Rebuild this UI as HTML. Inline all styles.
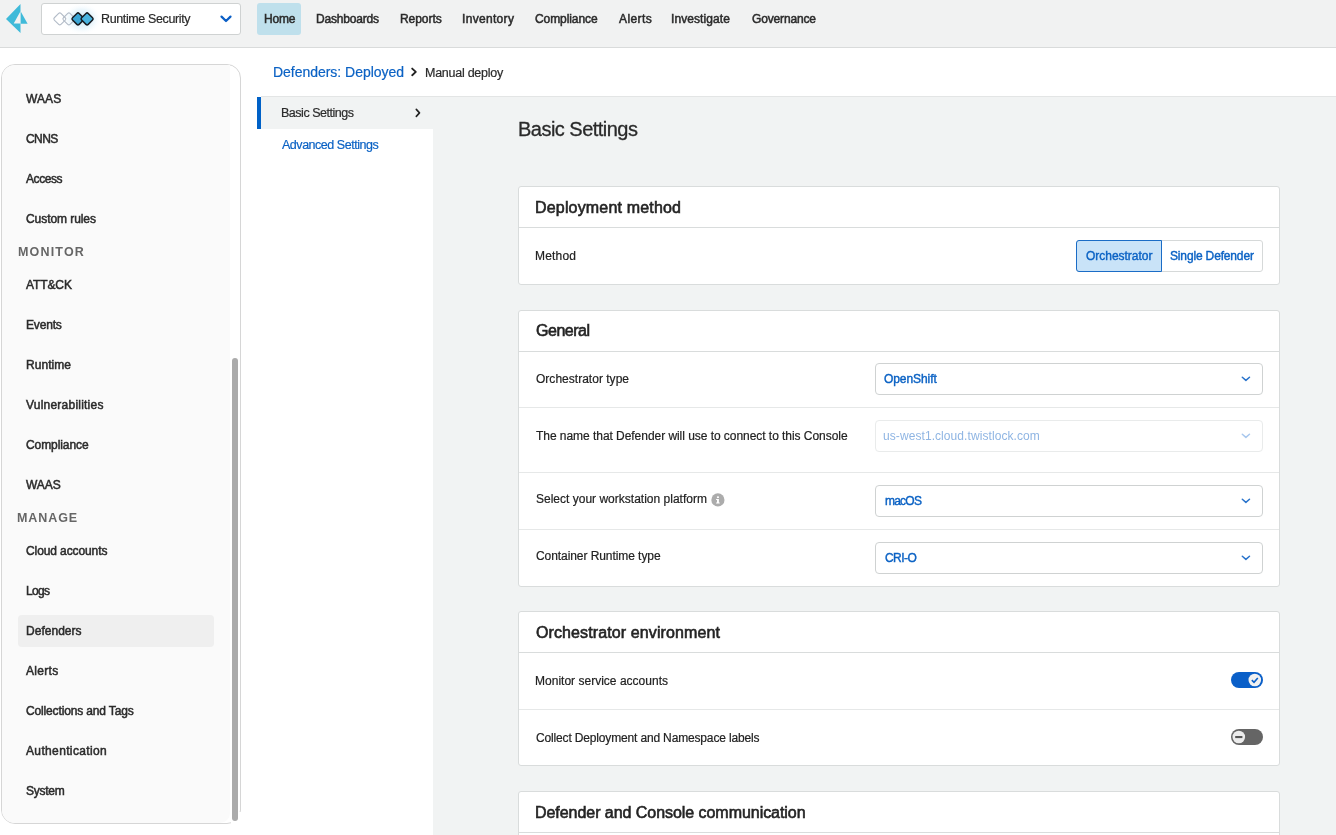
<!DOCTYPE html>
<html><head><meta charset="utf-8"><title>Manual deploy</title>
<style>
html,body{margin:0;padding:0;width:1336px;height:835px;overflow:hidden;background:#fff;font-family:"Liberation Sans",sans-serif}
.a{position:absolute;box-sizing:content-box}
.t{position:absolute;white-space:nowrap;line-height:20px;will-change:transform}
</style></head><body>
<div class="a" style="left:0;top:0;width:1336px;height:47px;background:#f1f2f2;border-bottom:1px solid #d9dbdb"></div>
<div class="a" style="left:41px;top:3px;width:198px;height:30px;border:1px solid #cfd2d2;border-radius:3px;background:#fff"></div>
<div class="a" style="left:257px;top:3px;width:44px;height:32px;background:#bfe0ec;border-radius:3px"></div>
<div class="a" style="left:1px;top:64px;width:238px;height:758px;border:1px solid #d6d6d6;border-radius:14px;background:#fff"></div>
<div class="a" style="left:2px;top:65px;width:228px;height:758px;background:#fafafa;border-radius:13px 0 10px 13px"></div>
<div class="a" style="left:231px;top:812px;width:11px;height:13px;background:#fff"></div>
<div class="a" style="left:232px;top:358px;width:6px;height:463px;background:#ababab;border-radius:3px"></div>
<div class="a" style="left:18px;top:615px;width:196px;height:32px;background:#efefef;border-radius:4px"></div>
<div class="a" style="left:261px;top:96px;width:1075px;height:1px;background:#e3e5e5"></div>
<div class="a" style="left:433px;top:97px;width:903px;height:738px;background:#f1f3f3"></div>
<div class="a" style="left:261px;top:97px;width:172px;height:32px;background:#f1f3f3"></div>
<div class="a" style="left:257px;top:97px;width:4px;height:32px;background:#0061c7"></div>
<div class="a" style="left:518px;top:186px;width:760px;height:97px;border:1px solid #d9dcdc;border-radius:3px;background:#fff"></div><div class="a" style="left:519px;top:227px;width:760px;height:1px;background:#d9dcdc"></div>
<div class="a" style="left:518px;top:310px;width:760px;height:275px;border:1px solid #d9dcdc;border-radius:3px;background:#fff"></div><div class="a" style="left:519px;top:351px;width:760px;height:1px;background:#d9dcdc"></div>
<div class="a" style="left:519px;top:407px;width:760px;height:1px;background:#e6e8e8"></div>
<div class="a" style="left:519px;top:472px;width:760px;height:1px;background:#e6e8e8"></div>
<div class="a" style="left:519px;top:529px;width:760px;height:1px;background:#e6e8e8"></div>
<div class="a" style="left:518px;top:611px;width:760px;height:153px;border:1px solid #d9dcdc;border-radius:3px;background:#fff"></div><div class="a" style="left:519px;top:652px;width:760px;height:1px;background:#d9dcdc"></div>
<div class="a" style="left:519px;top:709px;width:760px;height:1px;background:#e6e8e8"></div>
<div class="a" style="left:518px;top:791px;width:760px;height:98px;border:1px solid #d9dcdc;border-radius:3px;background:#fff"></div><div class="a" style="left:519px;top:832px;width:760px;height:1px;background:#d9dcdc"></div>
<div class="a" style="left:1076px;top:240px;width:185px;height:30px;border:1px solid #d6d9d9;border-radius:3px;background:#fff"></div>
<div class="a" style="left:1076px;top:240px;width:84px;height:30px;border:1px solid #1a6cc6;border-radius:3px 0 0 3px;background:#c9e3f8"></div>
<div class="a" style="left:875px;top:363px;width:386px;height:30px;border:1px solid #cfd2d2;border-radius:4px;background:#fff"></div>
<div class="a" style="left:875px;top:420px;width:386px;height:30px;border:1px solid #e9ebeb;border-radius:4px;background:#fff"></div>
<div class="a" style="left:875px;top:485px;width:386px;height:30px;border:1px solid #cfd2d2;border-radius:4px;background:#fff"></div>
<div class="a" style="left:875px;top:542px;width:386px;height:30px;border:1px solid #cfd2d2;border-radius:4px;background:#fff"></div>
<svg class="a" style="left:0;top:0" width="1336" height="835" viewBox="0 0 1336 835"><path d="M20.5 4.1 L20.5 11.2 L13.7 23.5 L20.5 23.5 L20.5 32.9 L6 19.1 Z" fill="#3fbad9"/><path d="M20.6 11.3 L27.6 23.8 L20.6 23.8 Z" fill="#3fbad9"/><defs><radialGradient id="gl" cx="0.5" cy="0.5" r="0.5"><stop offset="0" stop-color="#c6e6f6"/><stop offset="0.6" stop-color="#e4f3fb" stop-opacity="0.7"/><stop offset="1" stop-color="#ffffff" stop-opacity="0"/></radialGradient></defs><ellipse cx="82" cy="19" rx="20" ry="16" fill="url(#gl)"/><rect x="55.13" y="14.23" width="9.33" height="9.33" rx="1.6" transform="rotate(45 59.8 18.9)" fill="#fff" stroke="#b3bcc8" stroke-width="1.1"/><rect x="64.23" y="14.23" width="9.33" height="9.33" rx="1.6" transform="rotate(45 68.9 18.9)" fill="none" stroke="#b3bcc8" stroke-width="1.1"/><rect x="73.33" y="14.23" width="9.33" height="9.33" rx="1.6" transform="rotate(45 78.0 18.9)" fill="#3aa5d5" stroke="#161c22" stroke-width="1.5"/><rect x="82.43" y="14.23" width="9.33" height="9.33" rx="1.6" transform="rotate(45 87.1 18.9)" fill="#48b3df" stroke="#161c22" stroke-width="1.5"/><path d="M221.5 16.6 L226 21 L230.5 16.6" fill="none" stroke="#0b5fc6" stroke-width="2.2" stroke-linecap="round" stroke-linejoin="round"/><path d="M412.2 68.6 L415.8 71.9 L412.2 75.2" fill="none" stroke="#222" stroke-width="1.9" stroke-linecap="round" stroke-linejoin="round"/><path d="M416.3 109.4 L419.5 112.9 L416.3 116.4" fill="none" stroke="#222" stroke-width="1.6" stroke-linecap="round" stroke-linejoin="round"/><path d="M1242.3 377.2 L1245.9 380.4 L1249.5 377.2" fill="none" stroke="#2a74cc" stroke-width="1.5" stroke-linecap="round" stroke-linejoin="round"/><path d="M1242.3 434.2 L1245.9 437.4 L1249.5 434.2" fill="none" stroke="#a9c8ee" stroke-width="1.5" stroke-linecap="round" stroke-linejoin="round"/><path d="M1242.3 499.2 L1245.9 502.4 L1249.5 499.2" fill="none" stroke="#2a74cc" stroke-width="1.5" stroke-linecap="round" stroke-linejoin="round"/><path d="M1242.3 556.2 L1245.9 559.4 L1249.5 556.2" fill="none" stroke="#2a74cc" stroke-width="1.5" stroke-linecap="round" stroke-linejoin="round"/><circle cx="717.9" cy="499.9" r="6.6" fill="#acacac"/><rect x="716.9" y="496.2" width="2.1" height="1.9" rx="0.9" fill="#fff"/><path d="M716.1 498.9 L718.9 498.9 L718.9 502.4 L719.7 502.4 L719.7 503.5 L716.1 503.5 L716.1 502.4 L717 502.4 L717 500 L716.1 500 Z" fill="#fff"/><rect x="1231" y="672" width="32" height="16" rx="8" fill="#0a5fc8"/><circle cx="1254.8" cy="680" r="6.3" fill="#f1f1f1"/><path d="M1251.8 680.2 L1254 682.3 L1257.8 677.9" fill="none" stroke="#0a5fc8" stroke-width="1.6"/><rect x="1231" y="729" width="32" height="16" rx="8" fill="#656565"/><circle cx="1238.8" cy="737" r="6.3" fill="#ececec"/><rect x="1235.2" y="736" width="7.2" height="2.1" fill="#555"/></svg>
<div class="t" style="left:100.70px;top:9px;font-size:12.5px;font-weight:400;color:#2a2a2a;letter-spacing:-0.372px;-webkit-text-stroke:0.2px #2a2a2a;">Runtime Security</div>
<div class="t" style="left:263.60px;top:9px;font-size:12px;font-weight:400;color:#2b2b2b;letter-spacing:-0.167px;-webkit-text-stroke:0.5px #2b2b2b;">Home</div>
<div class="t" style="left:315.90px;top:9px;font-size:12px;font-weight:400;color:#2b2b2b;letter-spacing:-0.178px;-webkit-text-stroke:0.5px #2b2b2b;">Dashboards</div>
<div class="t" style="left:400.20px;top:9px;font-size:12px;font-weight:400;color:#2b2b2b;letter-spacing:-0.054px;-webkit-text-stroke:0.5px #2b2b2b;">Reports</div>
<div class="t" style="left:461.80px;top:9px;font-size:12px;font-weight:400;color:#2b2b2b;letter-spacing:0.319px;-webkit-text-stroke:0.5px #2b2b2b;">Inventory</div>
<div class="t" style="left:535.30px;top:9px;font-size:12px;font-weight:400;color:#2b2b2b;letter-spacing:-0.086px;-webkit-text-stroke:0.5px #2b2b2b;">Compliance</div>
<div class="t" style="left:618.60px;top:9px;font-size:12px;font-weight:400;color:#2b2b2b;letter-spacing:0.405px;-webkit-text-stroke:0.5px #2b2b2b;">Alerts</div>
<div class="t" style="left:671.00px;top:9px;font-size:12px;font-weight:400;color:#2b2b2b;letter-spacing:0.077px;-webkit-text-stroke:0.5px #2b2b2b;">Investigate</div>
<div class="t" style="left:751.50px;top:9px;font-size:12px;font-weight:400;color:#2b2b2b;letter-spacing:-0.153px;-webkit-text-stroke:0.5px #2b2b2b;">Governance</div>
<div class="t" style="left:26.30px;top:89px;font-size:12px;font-weight:400;color:#2b2b2b;letter-spacing:0.100px;-webkit-text-stroke:0.5px #2b2b2b;">WAAS</div>
<div class="t" style="left:26.30px;top:129px;font-size:12px;font-weight:400;color:#2b2b2b;letter-spacing:-0.567px;-webkit-text-stroke:0.5px #2b2b2b;">CNNS</div>
<div class="t" style="left:26.30px;top:169px;font-size:12px;font-weight:400;color:#2b2b2b;letter-spacing:-0.435px;-webkit-text-stroke:0.5px #2b2b2b;">Access</div>
<div class="t" style="left:26.30px;top:209px;font-size:12px;font-weight:400;color:#2b2b2b;letter-spacing:-0.064px;-webkit-text-stroke:0.5px #2b2b2b;">Custom rules</div>
<div class="t" style="left:26.30px;top:275px;font-size:12px;font-weight:400;color:#2b2b2b;letter-spacing:-0.110px;-webkit-text-stroke:0.5px #2b2b2b;">ATT&amp;CK</div>
<div class="t" style="left:26.30px;top:315px;font-size:12px;font-weight:400;color:#2b2b2b;letter-spacing:-0.175px;-webkit-text-stroke:0.5px #2b2b2b;">Events</div>
<div class="t" style="left:26.30px;top:355px;font-size:12px;font-weight:400;color:#2b2b2b;letter-spacing:0.054px;-webkit-text-stroke:0.5px #2b2b2b;">Runtime</div>
<div class="t" style="left:26.30px;top:395px;font-size:12px;font-weight:400;color:#2b2b2b;letter-spacing:0.225px;-webkit-text-stroke:0.5px #2b2b2b;">Vulnerabilities</div>
<div class="t" style="left:26.30px;top:435px;font-size:12px;font-weight:400;color:#2b2b2b;letter-spacing:-0.086px;-webkit-text-stroke:0.5px #2b2b2b;">Compliance</div>
<div class="t" style="left:26.30px;top:475px;font-size:12px;font-weight:400;color:#2b2b2b;letter-spacing:-0.033px;-webkit-text-stroke:0.5px #2b2b2b;">WAAS</div>
<div class="t" style="left:26.30px;top:541px;font-size:12px;font-weight:400;color:#2b2b2b;letter-spacing:-0.102px;-webkit-text-stroke:0.5px #2b2b2b;">Cloud accounts</div>
<div class="t" style="left:26.30px;top:581px;font-size:12px;font-weight:400;color:#2b2b2b;letter-spacing:-0.675px;-webkit-text-stroke:0.5px #2b2b2b;">Logs</div>
<div class="t" style="left:26.30px;top:621px;font-size:12px;font-weight:400;color:#2b2b2b;letter-spacing:0.028px;-webkit-text-stroke:0.5px #2b2b2b;">Defenders</div>
<div class="t" style="left:26.30px;top:661px;font-size:12px;font-weight:400;color:#2b2b2b;letter-spacing:0.305px;-webkit-text-stroke:0.5px #2b2b2b;">Alerts</div>
<div class="t" style="left:26.30px;top:701px;font-size:12px;font-weight:400;color:#2b2b2b;letter-spacing:-0.149px;-webkit-text-stroke:0.5px #2b2b2b;">Collections and Tags</div>
<div class="t" style="left:26.30px;top:741px;font-size:12px;font-weight:400;color:#2b2b2b;letter-spacing:0.358px;-webkit-text-stroke:0.5px #2b2b2b;">Authentication</div>
<div class="t" style="left:26.30px;top:781px;font-size:12px;font-weight:400;color:#2b2b2b;letter-spacing:-0.260px;-webkit-text-stroke:0.5px #2b2b2b;">System</div>
<div class="t" style="left:18.40px;top:242px;font-size:12.5px;font-weight:700;color:#666;letter-spacing:1.167px;">MONITOR</div>
<div class="t" style="left:16.90px;top:508px;font-size:12.5px;font-weight:700;color:#666;letter-spacing:0.930px;">MANAGE</div>
<div class="t" style="left:273.40px;top:62px;font-size:14px;font-weight:400;color:#0b62c4;letter-spacing:-0.029px;-webkit-text-stroke:0.2px #0b62c4;">Defenders: Deployed</div>
<div class="t" style="left:424.70px;top:63px;font-size:12.5px;font-weight:400;color:#2a2a2a;letter-spacing:-0.258px;-webkit-text-stroke:0.2px #2a2a2a;">Manual deploy</div>
<div class="t" style="left:280.70px;top:103px;font-size:12.5px;font-weight:400;color:#2a2a2a;letter-spacing:-0.477px;-webkit-text-stroke:0.2px #2a2a2a;">Basic Settings</div>
<div class="t" style="left:281.50px;top:135px;font-size:12.5px;font-weight:400;color:#0b62c4;letter-spacing:-0.470px;-webkit-text-stroke:0.2px #0b62c4;">Advanced Settings</div>
<div class="t" style="left:518.40px;top:119px;font-size:20px;font-weight:400;color:#2a2a2a;letter-spacing:-0.525px;-webkit-text-stroke:0.3px #2a2a2a;">Basic Settings</div>
<div class="t" style="left:535.10px;top:198px;font-size:16px;font-weight:400;color:#242424;letter-spacing:0.175px;-webkit-text-stroke:0.6px #242424;">Deployment method</div>
<div class="t" style="left:535.70px;top:321px;font-size:16px;font-weight:400;color:#242424;letter-spacing:-0.471px;-webkit-text-stroke:0.6px #242424;">General</div>
<div class="t" style="left:535.70px;top:623px;font-size:16px;font-weight:400;color:#242424;letter-spacing:0.109px;-webkit-text-stroke:0.6px #242424;">Orchestrator environment</div>
<div class="t" style="left:535.10px;top:803px;font-size:16px;font-weight:400;color:#242424;letter-spacing:-0.047px;-webkit-text-stroke:0.6px #242424;">Defender and Console communication</div>
<div class="t" style="left:534.90px;top:246px;font-size:12px;font-weight:400;color:#222;letter-spacing:0.175px;-webkit-text-stroke:0.2px #222;">Method</div>
<div class="t" style="left:535.50px;top:369px;font-size:12px;font-weight:400;color:#222;letter-spacing:0.019px;-webkit-text-stroke:0.2px #222;">Orchestrator type</div>
<div class="t" style="left:535.50px;top:426px;font-size:12px;font-weight:400;color:#222;letter-spacing:-0.045px;-webkit-text-stroke:0.2px #222;">The name that Defender will use to connect to this Console</div>
<div class="t" style="left:535.50px;top:489px;font-size:12px;font-weight:400;color:#222;letter-spacing:0.006px;-webkit-text-stroke:0.2px #222;">Select your workstation platform</div>
<div class="t" style="left:535.50px;top:546px;font-size:12px;font-weight:400;color:#222;letter-spacing:-0.070px;-webkit-text-stroke:0.2px #222;">Container Runtime type</div>
<div class="t" style="left:534.90px;top:671px;font-size:12px;font-weight:400;color:#222;letter-spacing:0.012px;-webkit-text-stroke:0.2px #222;">Monitor service accounts</div>
<div class="t" style="left:535.50px;top:728px;font-size:12px;font-weight:400;color:#222;letter-spacing:-0.157px;-webkit-text-stroke:0.2px #222;">Collect Deployment and Namespace labels</div>
<div class="t" style="left:884.20px;top:369px;font-size:12px;font-weight:400;color:#0b62c4;letter-spacing:-0.072px;-webkit-text-stroke:0.4px #0b62c4;">OpenShift</div>
<div class="t" style="left:883.40px;top:426px;font-size:12px;font-weight:400;color:#8fb5e3;letter-spacing:0.077px;">us-west1.cloud.twistlock.com</div>
<div class="t" style="left:884.50px;top:491px;font-size:12px;font-weight:400;color:#0b62c4;letter-spacing:-0.775px;-webkit-text-stroke:0.4px #0b62c4;">macOS</div>
<div class="t" style="left:884.50px;top:548px;font-size:12px;font-weight:400;color:#0b62c4;letter-spacing:-0.550px;-webkit-text-stroke:0.4px #0b62c4;">CRI-O</div>
<div class="t" style="left:1085.70px;top:246px;font-size:12px;font-weight:400;color:#0b62c4;letter-spacing:-0.025px;-webkit-text-stroke:0.4px #0b62c4;">Orchestrator</div>
<div class="t" style="left:1170.00px;top:246px;font-size:12px;font-weight:400;color:#0b62c4;letter-spacing:-0.154px;-webkit-text-stroke:0.4px #0b62c4;">Single Defender</div>
</body></html>
